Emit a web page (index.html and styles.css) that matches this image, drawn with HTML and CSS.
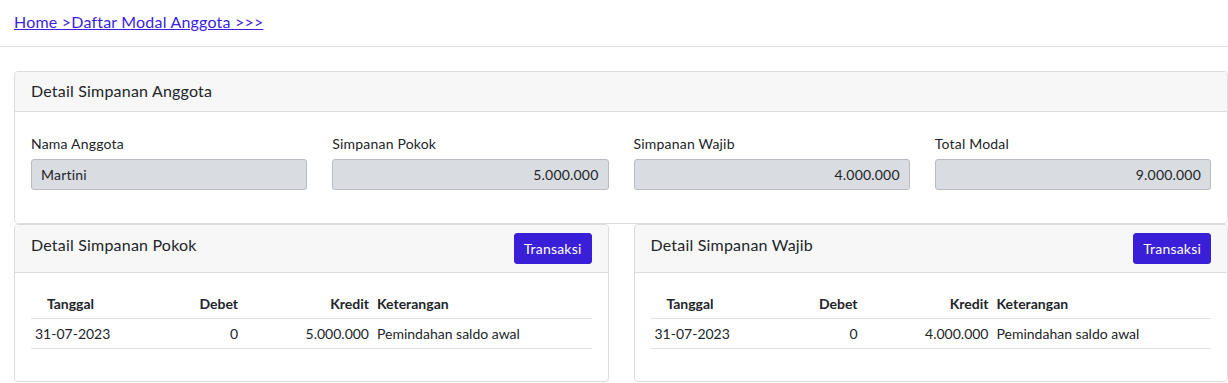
FILE: index.html
```html
<!DOCTYPE html>
<html lang="id">
<head>
	<meta charset="UTF-8">
	<meta name="viewport" content="width=device-width, initial-scale=1.0">
	<title>Daftar Modal Anggota</title>
	<link rel="stylesheet" href="styles.css">
</head>
<body>
	<div class="crumbs">
		<a href="">Home &gt;Daftar Modal Anggota &gt;&gt;&gt;</a>
	</div>

	<div class="content">
		<div class="card">
			<div class="card-header">Detail Simpanan Anggota</div>
			<div class="card-body summary">
				<div class="field">
					<label>Nama Anggota</label>
					<div class="input">Martini</div>
				</div>
				<div class="field">
					<label>Simpanan Pokok</label>
					<div class="input num">5.000.000</div>
				</div>
				<div class="field">
					<label>Simpanan Wajib</label>
					<div class="input num">4.000.000</div>
				</div>
				<div class="field">
					<label>Total Modal</label>
					<div class="input num">9.000.000</div>
				</div>
			</div>
		</div>

		<div class="pair">
			<div class="card">
				<div class="card-header split">
					<span>Detail Simpanan Pokok</span>
					<a href="" class="btn">Transaksi</a>
				</div>
				<div class="card-body">
					<table class="tbl">
						<thead>
							<tr>
								<th class="c-date">Tanggal</th>
								<th class="c-num c-debet">Debet</th>
								<th class="c-num c-kredit">Kredit</th>
								<th>Keterangan</th>
							</tr>
						</thead>
						<tbody>
							<tr>
								<td class="c-date">31-07-2023</td>
								<td class="c-num">0</td>
								<td class="c-num">5.000.000</td>
								<td>Pemindahan saldo awal</td>
							</tr>
						</tbody>
					</table>
				</div>
			</div>

			<div class="card">
				<div class="card-header split">
					<span>Detail Simpanan Wajib</span>
					<a href="" class="btn">Transaksi</a>
				</div>
				<div class="card-body">
					<table class="tbl">
						<thead>
							<tr>
								<th class="c-date">Tanggal</th>
								<th class="c-num c-debet">Debet</th>
								<th class="c-num c-kredit">Kredit</th>
								<th>Keterangan</th>
							</tr>
						</thead>
						<tbody>
							<tr>
								<td class="c-date">31-07-2023</td>
								<td class="c-num">0</td>
								<td class="c-num">4.000.000</td>
								<td>Pemindahan saldo awal</td>
							</tr>
						</tbody>
					</table>
				</div>
			</div>
		</div>
	</div>
</body>
</html>
```

FILE: styles.css
```css
* {
	padding: 0;
	margin: 0;
	box-sizing: border-box;
}
body {
	font-family: Lato, "Open Sans", sans-serif;
	font-size: 16px;
	line-height: 1.5;
	color: #212529;
	background: #fff;
	letter-spacing: 0.2px;
}

.crumbs {
	height: 47px;
	padding: 10px 14px 0;
	border-bottom: 1px solid #dee2e6;
}
.crumbs a {
	color: #3a1fdf;
}

.content {
	padding: 24px 0 0 14px;
}

.card {
	border: 1px solid #dcdcdc;
	border-radius: 4px;
	background: #fff;
	overflow: hidden;
}
.card-header {
	background: #f7f7f7;
	border-bottom: 1px solid #dcdcdc;
	padding: 7px 16px 8px;
}
.card-header.split {
	display: flex;
	justify-content: space-between;
	align-items: flex-start;
	padding: 8px 16px;
}
.card-body {
	padding: 16px;
}

.summary {
	display: grid;
	grid-template-columns: repeat(4, 1fr);
	column-gap: 25px;
	padding-top: 21px;
	padding-bottom: 17px;
}
.field label {
	display: block;
	font-size: 14px;
	line-height: 21px;
	margin-bottom: 5px;
}
.input {
	height: 31px;
	padding: 4px 9px;
	font-size: 14px;
	line-height: 21px;
	background: #d9dce0;
	border: 1px solid #b7bcc2;
	border-radius: 3px;
	margin-bottom: 16px;
}
.input.num {
	text-align: right;
}

.pair {
	display: grid;
	grid-template-columns: 1fr 1fr;
	column-gap: 25px;
}

.btn {
	display: inline-block;
	background: #3a1fd9;
	color: #fff;
	text-decoration: none;
	font-size: 14px;
	line-height: 21px;
	padding: 4px 9px;
	border: 1px solid #3a1fd9;
	border-radius: 3px;
}

.tbl {
	width: 100%;
	table-layout: fixed;
	border-collapse: collapse;
	font-size: 14px;
	line-height: 21px;
	letter-spacing: 0;
	margin-bottom: 16px;
}
.tbl th,
.tbl td {
	padding: 4px;
	text-align: left;
	white-space: nowrap;
	border-bottom: 1px solid #dee2e6;
}
.tbl th {
	font-weight: bold;
}
.tbl .c-date {
	width: 79px;
	text-align: center;
}
.tbl .c-debet {
	width: 132px;
}
.tbl .c-kredit {
	width: 131px;
}
.tbl .c-num {
	text-align: right;
}
```
